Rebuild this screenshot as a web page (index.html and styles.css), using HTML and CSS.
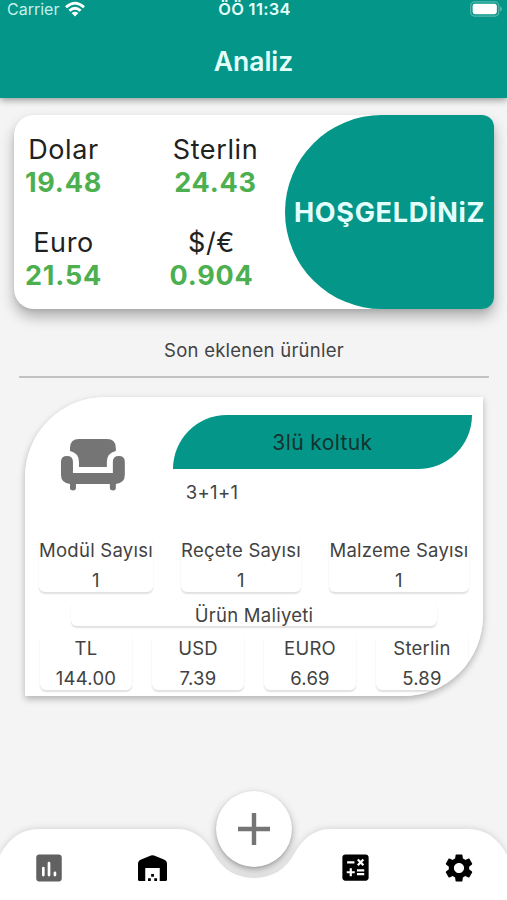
FILE: index.html
```html
<!DOCTYPE html>
<html lang="tr">
<head>
<meta charset="utf-8">
<title>Analiz</title>
<link rel="stylesheet" href="styles.css">
</head>
<body>
<div class="app">
  <header class="header">
    <div class="status">
      <div class="carrier"><span>Carrier</span>
        <svg class="wifi" viewBox="0 0 20 16"><g fill="none" stroke="#fff" stroke-width="2.8"><path d="M1 6.2Q10-2 19 6.2"/><path d="M4.4 9.8Q10 4.6 15.6 9.8"/></g><path fill="#fff" d="M6.6 12.1Q10 9.2 13.4 12.1L10 15.6Z"/></svg>
      </div>
      <div class="clock">ÖÖ 11:34</div>
      <div class="power"><svg class="battery" viewBox="0 0 33 16"><rect x=".7" y=".7" width="29" height="14.6" rx="4" fill="none" stroke="#5bb8ae" stroke-width="1.2"/><rect x="2.7" y="2.7" width="25" height="10.6" rx="2.4" fill="#fff"/><path d="M31 5.4q2 .8 2 2.6t-2 2.6z" fill="#5bb8ae"/></svg></div>
    </div>
    <h1 class="title">Analiz</h1>
  </header>

  <main class="content">
    <section class="rates">
      <div class="rates-list">
        <div class="rates-row">
          <div class="rate"><span class="rate-name">Dolar</span><span class="rate-value">19.48</span></div>
          <div class="rate rate-wide"><span class="rate-name">Sterlin</span><span class="rate-value">24.43</span></div>
        </div>
        <div class="rates-row">
          <div class="rate"><span class="rate-name">Euro</span><span class="rate-value">21.54</span></div>
          <div class="rate"><span class="rate-name">$/€</span><span class="rate-value">0.904</span></div>
        </div>
      </div>
      <div class="welcome">HOŞGELDİNiZ</div>
    </section>

    <h2 class="section-title">Son eklenen ürünler</h2>

    <div class="card-shadow">
    <article class="product">
      <div class="product-head">
        <svg class="sofa" viewBox="0 0 64 52" fill="#757575"><path d="M9 12V9Q9 0 18 0H46Q55 0 55 9V12Q46 14 46 23V28H18V23Q18 14 9 12Z"/><path d="M0 23Q0 17 6 17T12 23V34H52V23Q52 17 58 17T64 23V36Q64 44 55 45V49Q55 51.500 52 51.500T49 49V45H15V49Q15 51.500 12 51.500T9 49V45Q0 44 0 36Z"/></svg>
        <div class="product-info">
          <div class="product-name">3lü koltuk</div>
          <div class="product-desc">3+1+1</div>
        </div>
      </div>
      <div class="counts">
        <div class="box box-module"><span>Modül Sayısı</span><span>1</span></div>
        <div class="box box-recipe"><span>Reçete Sayısı</span><span>1</span></div>
        <div class="box box-material"><span>Malzeme Sayısı</span><span>1</span></div>
      </div>
      <div class="box cost-title">Ürün Maliyeti</div>
      <div class="costs">
        <div class="box"><span>TL</span><span>144.00</span></div>
        <div class="box"><span>USD</span><span>7.39</span></div>
        <div class="box"><span>EURO</span><span>6.69</span></div>
        <div class="box"><span>Sterlin</span><span>5.89</span></div>
      </div>
    </article>
    </div>
  </main>

  <footer class="nav">
    <svg class="nav-shape" viewBox="0 0 507 71"><path fill="#fff" d="M0 26Q14 0 39 0H177C196 0 207 13 214 25C222 40 236 49 254 49S286 40 294 25C301 13 312 0 331 0H468Q493 0 507 26V71H0Z"/></svg>
    <nav class="tabs">
      <svg viewBox="0 0 24 24" fill="#616161"><path d="M19 2.500H5c-1.100 0-2 .9-2 2v15c0 1.100.9 2 2 2h14c1.100 0 2-.9 2-2v-15c0-1.100-.9-2-2-2z"/><path d="M8 12v5M12 8.600v8.400M16.200 15.500v1.500" stroke="#fff" stroke-width="1.900" stroke-linecap="round"/></svg>
      <svg class="tab-store" viewBox="0 0 28 25"><path d="M3 4.300L12.500.4Q14-.2 15.500.4L25 4.300Q28 5.700 28 8.500V23.500Q28 25 26.500 25H21V12.500H7V25H1.500Q0 25 0 23.500V8.500Q0 5.700 3 4.300Z"/><path d="M12.700 18.300h2.700V21h-2.700zM9.700 22.300h2.700V25H9.700zM15.700 22.300h2.700V25h-2.700z"/></svg>
      <svg class="tab-calc" viewBox="0 0 24 24"><path d="M19 3H5c-1.100 0-2 .9-2 2v14c0 1.100.9 2 2 2h14c1.100 0 2-.9 2-2V5c0-1.100-.9-2-2-2zm-5.970 4.060L14.090 6l1.410 1.410L16.910 6l1.060 1.060-1.410 1.410 1.410 1.410-1.060 1.060-1.410-1.400-1.410 1.410-1.060-1.060 1.410-1.410-1.410-1.420zm-6.780.66h5v1.500h-5v-1.500zM11.500 16h-2v2H8v-2H6v-1.500h2v-2h1.500v2h2V16zm6.500 1.250h-5v-1.500h5v1.500zm0-2.500h-5v-1.500h5v1.500z"/></svg>
      <svg viewBox="0 0 24 24"><path d="M19.140 12.940c.04-.3.06-.61.06-.94 0-.32-.02-.64-.07-.94l2.030-1.580c.18-.14.230-.41.120-.61l-1.920-3.320c-.12-.22-.37-.29-.59-.22l-2.390.96c-.5-.38-1.030-.7-1.620-.94l-.36-2.540c-.04-.24-.24-.41-.48-.41h-3.840c-.24 0-.43.17-.47.41l-.36 2.540c-.59.24-1.130.57-1.620.94l-2.390-.96c-.22-.08-.47 0-.59.22L2.740 8.870c-.12.210-.08.470.12.610l2.030 1.580c-.05.3-.09.630-.09.940s.02.640.07.940l-2.030 1.580c-.18.140-.23.410-.12.610l1.920 3.320c.12.220.37.290.59.220l2.390-.96c.5.380 1.030.7 1.620.94l.36 2.540c.05.240.24.410.48.410h3.840c.24 0 .44-.17.470-.41l.36-2.540c.59-.24 1.130-.56 1.620-.94l2.390.96c.22.080.47 0 .59-.22l1.920-3.320c.12-.22.070-.47-.12-.61l-2.010-1.580zM12 15.600c-1.980 0-3.600-1.620-3.600-3.600s1.620-3.600 3.600-3.600 3.600 1.620 3.600 3.600-1.620 3.600-3.600 3.600z"/></svg>
    </nav>
    <div class="fab"><svg viewBox="0 0 32 32"><path d="M16 0V32M0 16H32" stroke="#757575" stroke-width="4.400"/></svg></div>
  </footer>
</div>
</body>
</html>
```
FILE: styles.css
```css
* { box-sizing: border-box; }
body { margin: 0; font-family: Inter, "Liberation Sans", sans-serif; color: #424242; }
svg { display: block; }
.app { width: 507px; height: 900px; display: flex; flex-direction: column; background: #f4f4f4; overflow: hidden; }

.header { height: 98px; flex: none; background: #049688; color: #e4fffc; box-shadow: 0 2px 7px rgba(0, 0, 0, .4); }
.status { height: 18px; display: grid; grid-template-columns: 1fr auto 1fr; align-items: center; padding: 0 5px 0 7px; font-size: 16px; line-height: 18px; }
.carrier { display: flex; align-items: center; gap: 6px; color: #c5f0eb; }
.wifi { width: 20px; height: 16px; }
.clock { font-weight: 600; font-size: 16.500px; letter-spacing: .3px; }
.power { display: flex; justify-content: flex-end; }
.battery { width: 32px; height: 16px; }
.title { margin: 27px 0 0; text-align: center; font-size: 26.500px; line-height: 32px; font-weight: 600; }

.content { flex: 1; padding: 17px 13px 0 14px; }
.rates { height: 194px; display: flex; border-radius: 20px 12px 12px 20px; background: #fff; box-shadow: 0 8px 14px rgba(0, 0, 0, .28), 0 2px 4px rgba(0, 0, 0, .08); }
.rates-list { width: 271px; padding-top: 18px; display: flex; flex-direction: column; gap: 27px; }
.rates-row { display: flex; gap: 49px; }
.rate { width: 99px; display: flex; flex-direction: column; align-items: center; line-height: 33px; white-space: nowrap; }
.rate-wide { width: 107px; }
.rate-name { font-size: 27px; color: #212121; letter-spacing: .6px; }
.rate-value { font-size: 27px; font-weight: 700; color: #4caf50; letter-spacing: .8px; }
.welcome { flex: 1; display: flex; align-items: center; justify-content: center; background: #049688; border-radius: 97px 12px 12px 97px; color: #e4fffc; font-size: 27px; font-weight: 700; letter-spacing: .7px; }

.section-title { margin: 30px 5px 0 5px; padding: 0 0 15px; border-bottom: 2px solid #c2c2c2; text-align: center; font-size: 18.500px; line-height: 22px; font-weight: 400; letter-spacing: .25px; }

.card-shadow { width: 458px; height: 299px; margin: 19px 0 0 11px; border-radius: 80px 0 80px 0; box-shadow: 0 3px 7px rgba(0, 0, 0, .28); }
.product { height: 100%; border-radius: 80px 0 80px 0; background: #fff; overflow: hidden; padding: 18px 11px 0 14px; font-size: 18.500px; }
.product-head { display: flex; height: 122px; padding-left: 22px; }
.sofa { width: 64px; height: 52px; margin-top: 24px; }
.product-info { width: 300px; margin-left: 48px; }
.product-name { height: 54px; border-radius: 54px 0 54px 0; background: #049688; color: #14322f; font-size: 21px; line-height: 55px; text-align: center; letter-spacing: .4px; }
.product-desc { padding: 12px 0 0 13px; line-height: 22px; letter-spacing: .3px; }
.box { display: flex; flex-direction: column; align-items: center; border-radius: 6px; background: #fff; box-shadow: 0 1.500px 1.500px rgba(0, 0, 0, .12); white-space: nowrap; letter-spacing: .25px; }
.counts { display: flex; }
.counts .box { height: 55px; line-height: 30px; }
.box-module { width: 114px; }
.box-recipe { width: 120px; margin-left: 28px; }
.box-material { width: 140px; margin-left: 28px; }
.counts .box span:first-child { margin-top: -2px; }
.cost-title { width: 366px; height: 24px; margin: 10px 0 0 32px; line-height: 26px; }
.costs { display: flex; gap: 20px; margin: 8px 0 0 1px; }
.costs .box { width: 92px; height: 56px; line-height: 30px; }
.costs .box span:first-child { margin-top: -1px; }

.nav { position: relative; flex: none; height: 71px; }
.nav-shape { position: absolute; left: 0; top: 0; width: 507px; height: 71px; overflow: visible; filter: drop-shadow(0 -1px 3px rgba(0, 0, 0, .12)); }
.tabs { position: relative; display: flex; align-items: center; height: 77px; padding-left: 32px; }
.tabs svg { width: 34px; height: 34px; }
.tabs .tab-store { width: 29px; height: 26px; margin-left: 72px; }
.tabs .tab-calc { width: 35px; height: 35px; margin: 0 69px 0 171px; }
.fab { position: absolute; left: 216px; top: -38px; width: 76px; height: 76px; border-radius: 50%; background: #fff; display: flex; align-items: center; justify-content: center; box-shadow: 0 4px 8px rgba(0, 0, 0, .3), 0 1px 3px rgba(0, 0, 0, .12); }
.fab svg { width: 32px; height: 32px; }
```
